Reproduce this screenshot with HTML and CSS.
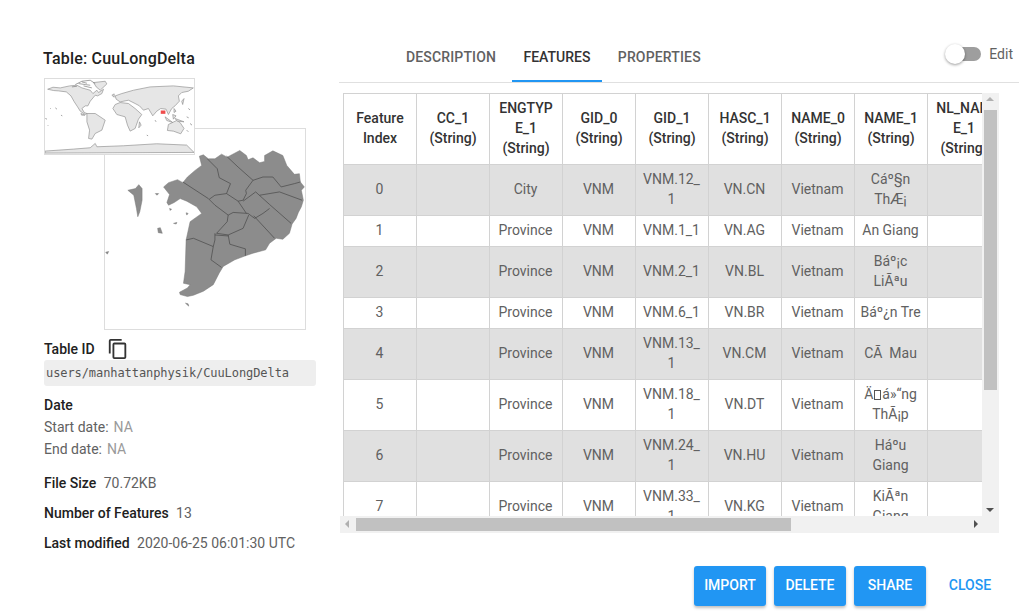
FILE: index.html
```html
<!DOCTYPE html>
<html lang="en">
<head>
<meta charset="utf-8">
<title>Table: CuuLongDelta</title>
<link rel="stylesheet" href="styles.css">
</head>
<body>
<div class="dialog">
  <aside class="info">
    <h1 class="title">Table: CuuLongDelta</h1>
    <div class="thumbs">
      <div class="map-box">
        <svg class="map-svg" viewBox="13 10 604 604">
          <path class="region" d="M190 185L205 172L232 163L248 172L262 155L285 135L305 120L298 92L310 88L325 100L345 100L365 86L382 95L420 75L440 90L445 103L460 97L480 112L495 108L495 90L520 76L550 90L562 120L585 147L600 145L603 170L615 185L606 195L612 225L606 245L597 262L590 280L578 297L570 325L550 343L530 340L510 355L498 375L460 385L437 393L405 405L370 425L358 445L340 480L310 500L280 512L262 516L240 510L238 503L262 490L270 480L250 476L255 440L258 345L270 290L305 265L290 245L260 228L240 220L222 232L205 240L200 232L208 208Z"/>
          <path class="region" d="M82 195L105 190L115 178L125 190L125 225L118 260L112 275L108 250L100 210Z"/>
          <path class="region" d="M172 310L180 308L186 325L174 323ZM220 295L230 292L228 297ZM258 263L264 265L260 270ZM15 382L24 380L20 388ZM256 536L264 538L266 545ZM165 205L175 205L170 210ZM208 250L214 252L210 256Z"/>
          <path class="border" d="M248 170L325 220L345 240L385 270L400 262L445 265M322 100L352 130L358 157L392 175L380 205L345 210L328 222M380 205L415 228L440 265M380 92L415 125L460 165L438 195L440 205L430 225L415 228M460 165L490 155L520 155L545 185L585 175L603 170M430 228L468 200L510 238L575 295M480 210L540 200L608 225M445 265L465 280L490 265L510 250M447 270L430 310L385 330L350 325L382 290L385 270M462 272L525 340M385 330L390 358L437 372L437 393M345 325L345 345L340 365L333 405L365 428M345 330L385 333M258 345L280 340L340 365"/>
        </svg>
      </div>
      <div class="world-box">
        <svg class="world-svg" viewBox="14 12 448 224">
          <path class="land" d="M22 42L38 36L60 38L88 32L110 30L125 38L150 45L158 55L170 45L175 52L190 42L185 55L172 62L165 60L150 78L143 92L135 92L125 100L132 112L140 115L135 118L120 108L112 95L102 80L92 62L78 50L55 47L40 46Z"/>
          <path class="land" d="M160 22L195 18L200 26L180 45L168 35Z"/>
          <path class="coast" d="M105 28L125 18L150 15L165 25M115 25L135 28L150 30M125 20L140 24M130 32L155 38M95 35L110 33"/>
          <path class="land" d="M140 115L165 115L195 135L185 165L165 175L155 192L145 190L148 165L140 140Z"/>
          <path class="land" d="M218 100L225 88L240 82L265 85L285 100L305 118L295 132L285 160L270 168L262 150L255 125L230 118Z"/>
          <path class="land" d="M225 62L245 55L280 45L330 35L400 32L460 38L445 48L425 52L415 62L418 78L405 92L395 100L385 118L378 102L362 100L350 108L338 122L325 100L310 105L298 92L285 85L265 75L240 80L228 72Z"/>
          <path class="land" d="M385 148L410 136L420 142L432 160L422 176L400 168L382 166Z"/>
          <path class="land" d="M14 228L100 222L150 218L165 205L170 215L250 212L350 206L440 210L462 232L14 234Z"/>
          <path class="land" d="M375 125L398 142L380 136ZM398 118L408 122L400 132ZM405 130L432 140L412 138ZM298 140L303 150L296 158ZM402 100L408 108L402 112ZM425 78L432 70L428 88ZM215 60L222 56L222 66ZM122 115L134 120L124 120Z"/>
          <path class="coast" d="M30 100L32 100M45 98L50 102M62 120L66 122M15 130L20 132M440 125L446 128M450 145L456 150M440 165L445 170M345 135L348 140M320 180L324 182M22 150L24 152M445 100L450 104"/>
          <rect class="mark" x="362" y="106" width="14" height="10"/>
        </svg>
      </div>
    </div>
    <div class="id-head">
      <span class="label">Table ID</span>
      <svg class="copy-icon" viewBox="0 0 24 24"><path d="M19,21H8V7H19M19,5H8A2,2 0 0,0 6,7V21A2,2 0 0,0 8,23H19A2,2 0 0,0 21,21V7A2,2 0 0,0 19,5M16,1H4A2,2 0 0,0 2,3V17H4V3H16V1Z"/></svg>
    </div>
    <div class="id-box">users/manhattanphysik/CuuLongDelta</div>
    <div class="label date-head">Date</div>
    <div class="date-row">Start date:<span class="muted">NA</span></div>
    <div class="date-row">End date:<span class="muted">NA</span></div>
    <div class="meta first"><span class="label">File Size</span><span class="val">70.72KB</span></div>
    <div class="meta"><span class="label">Number of Features</span><span class="val">13</span></div>
    <div class="meta"><span class="label">Last modified</span><span class="val">2020-06-25 06:01:30 UTC</span></div>
  </aside>
  <main class="content">
    <div class="tabbar">
      <nav class="tabs">
        <a class="tab">DESCRIPTION</a>
        <a class="tab active">FEATURES</a>
        <a class="tab">PROPERTIES</a>
      </nav>
      <div class="edit">
        <span class="switch"><span class="knob"></span></span>
        <span class="edit-label">Edit</span>
      </div>
    </div>
    <div class="table-frame">
      <div class="viewport">
        <table class="grid">
          <thead>
            <tr><th>Feature Index</th><th>CC_1 (String)</th><th>ENGTYPE_1 (String)</th><th>GID_0 (String)</th><th>GID_1 (String)</th><th>HASC_1 (String)</th><th>NAME_0 (String)</th><th>NAME_1 (String)</th><th>NL_NAME_1 (String)</th></tr>
          </thead>
          <tbody>
            <tr><td>0</td><td></td><td>City</td><td>VNM</td><td>VNM.12_1</td><td>VN.CN</td><td>Vietnam</td><td>Cáº§n ThÆ¡</td><td></td></tr>
            <tr><td>1</td><td></td><td>Province</td><td>VNM</td><td>VNM.1_1</td><td>VN.AG</td><td>Vietnam</td><td>An Giang</td><td></td></tr>
            <tr><td>2</td><td></td><td>Province</td><td>VNM</td><td>VNM.2_1</td><td>VN.BL</td><td>Vietnam</td><td>Báº¡c LiÃªu</td><td></td></tr>
            <tr><td>3</td><td></td><td>Province</td><td>VNM</td><td>VNM.6_1</td><td>VN.BR</td><td>Vietnam</td><td>Báº¿n Tre</td><td></td></tr>
            <tr><td>4</td><td></td><td>Province</td><td>VNM</td><td>VNM.13_1</td><td>VN.CM</td><td>Vietnam</td><td>CÃ&nbsp; Mau</td><td></td></tr>
            <tr><td>5</td><td></td><td>Province</td><td>VNM</td><td>VNM.18_1</td><td>VN.DT</td><td>Vietnam</td><td>Ä<span class="tofu"></span>á»“ng ThÃ¡p</td><td></td></tr>
            <tr><td>6</td><td></td><td>Province</td><td>VNM</td><td>VNM.24_1</td><td>VN.HU</td><td>Vietnam</td><td>Háº&shy;u Giang</td><td></td></tr>
            <tr><td>7</td><td></td><td>Province</td><td>VNM</td><td>VNM.33_1</td><td>VN.KG</td><td>Vietnam</td><td>KiÃªn Giang</td><td></td></tr>
          </tbody>
        </table>
      </div>
      <div class="vbar">
        <span class="arrow up"></span>
        <span class="vthumb"></span>
        <span class="arrow down"></span>
      </div>
      <div class="hbar">
        <span class="arrow left"></span>
        <span class="hthumb"></span>
        <span class="arrow right"></span>
      </div>
      <div class="corner"></div>
    </div>
    <div class="actions">
      <button class="btn solid">IMPORT</button>
      <button class="btn solid">DELETE</button>
      <button class="btn solid">SHARE</button>
      <button class="btn text">CLOSE</button>
    </div>
  </main>
</div>
</body>
</html>
```

FILE: styles.css
```css
* { box-sizing: border-box; }
html, body { margin: 0; padding: 0; background: #fff; }
body {
  font-family: Roboto, "Liberation Sans", sans-serif;
  font-size: 14px;
  line-height: 20px;
  color: #212121;
  width: 1033px;
  height: 614px;
  overflow: hidden;
}
.dialog { display: flex; align-items: flex-start; }

/* left column */
.info { width: 339px; padding: 48px 0 0 43px; flex: none; }
.title { margin: 0; padding-top: 1px; height: 20px; font-size: 16px; line-height: 20px; font-weight: 500; letter-spacing: .2px; color: #212121; }
.thumbs { position: relative; height: 252px; margin: 10px 0 0 1px; }
.map-box { margin-left: 60px; margin-top: 50px; width: 202px; height: 202px; border: 1px solid #ddd; background: #fff; display: inline-block; vertical-align: top; }
.map-svg { display: block; width: 200px; height: 200px; }
.region { fill: #8c8c8c; stroke: #777; stroke-width: 1.5; stroke-linejoin: round; }
.border { fill: none; stroke: #444; stroke-width: 2; stroke-linejoin: round; }
.world-box { position: absolute; left: 0; top: 0; width: 151px; height: 77px; border: 1px solid #ddd; background: #fff; }
.world-svg { display: block; width: 149px; height: 75px; }
.land { fill: #e6e6e6; stroke: #909090; stroke-width: 2; stroke-linejoin: round; }
.coast { fill: none; stroke: #777; stroke-width: 2; }
.mark { fill: #ef4d4d; }

.label { font-weight: 500; color: #212121; }
.id-head { display: flex; align-items: center; height: 22px; margin: 8px 0 0 1px; }
.copy-icon { width: 22px; height: 22px; margin-left: 12px; fill: #333; }
.id-box {
  width: 272px; height: 26px; margin: 0 0 0 1px; padding: 0 2px;
  background: #eee; border-radius: 3px;
  font-family: "DejaVu Sans Mono", "Liberation Mono", monospace;
  font-size: 12px; letter-spacing: -.08px; line-height: 26px; color: #555;
}
.date-head { margin: 9px 0 0 1px; }
.date-row { margin: 2px 0 0 1px; color: #616161; }
.muted { color: #9a9a9a; margin-left: 5px; }
.meta { margin: 10px 0 0 1px; }
.meta.first { margin-top: 14px; }
.val { color: #616161; margin-left: 7.4px; }

/* right column */
.content { width: 680px; padding-top: 34px; flex: none; }
.tabbar { display: flex; align-items: flex-start; height: 49px; border-bottom: 1px solid #e0e0e0; }
.tabs { display: flex; gap: 3.4px; margin-left: 55px; }
.tab {
  height: 48px; padding: 0 12px; line-height: 46px;
  font-weight: 500; font-size: 14px; letter-spacing: .15px; color: #616161; border-bottom: 2px solid transparent;
}
.tab.active { color: #333; letter-spacing: 0; border-bottom-color: #2196f3; }
.edit { display: flex; align-items: center; margin-left: auto; height: 40px; }
.switch { position: relative; display: block; width: 35px; height: 14px; border-radius: 7px; background: #9e9e9e; }
.knob { position: absolute; left: -1px; top: -3px; width: 20px; height: 20px; border-radius: 50%; background: #fff; box-shadow: 0 1px 3px rgba(0,0,0,.4); }
.edit-label { margin: 0 6px 0 8px; color: #616161; }

.table-frame {
  display: grid; grid-template-columns: 642px 17px; grid-template-rows: 423px 17px;
  width: 659px; margin: 10px 0 0 1px;
}
.viewport { overflow: hidden; background: #fff; padding-left: 3px; }
.grid { border-collapse: collapse; table-layout: fixed; width: 657px; }
.grid th, .grid td {
  width: 73px; padding: 4px 6px 6px 5px; border: 1px solid #d2d2d2; text-align: center; vertical-align: middle;
  overflow-wrap: break-word; word-break: break-word;
}
.grid th { padding-left: 6px; font-weight: 500; color: #333; }
.grid td { color: #616161; }
.grid tbody tr:nth-child(odd) td { background: #e0e0e0; }
.tofu { display: inline-block; width: 7px; height: 10px; margin: 0 1px; border: 1px solid #555; vertical-align: -1px; }

.vbar, .hbar { position: relative; background: #f1f1f1; }
.corner { background: #f1f1f1; }
.vthumb { position: absolute; left: 2px; top: 17px; width: 13px; height: 280px; background: #c1c1c1; }
.hthumb { position: absolute; left: 16px; top: 2px; width: 435px; height: 13px; background: #c1c1c1; }
.arrow { position: absolute; width: 0; height: 0; border: 4px solid transparent; }
.arrow.up { left: 4px; top: 4px; border-top-width: 0; border-bottom-color: #b0b0b0; }
.arrow.down { left: 4px; bottom: 4px; border-bottom-width: 0; border-top-color: #505050; }
.arrow.left { left: 5px; top: 4px; border-left-width: 0; border-right-color: #b0b0b0; }
.arrow.right { right: 4px; top: 4px; border-right-width: 0; border-left-color: #505050; }

.actions { display: flex; justify-content: flex-end; gap: 8px; margin: 33px 13px 0 0; }
.btn {
  width: 72px; height: 40px; padding: 0 0 2px; border: 0; border-radius: 3px;
  font-family: inherit; font-size: 14px; font-weight: 500; cursor: pointer;
}
.btn.solid { background: #2196f3; color: #fff; box-shadow: 0 2px 3px rgba(0,0,0,.25); }
.btn.text { background: transparent; color: #2196f3; }
```
